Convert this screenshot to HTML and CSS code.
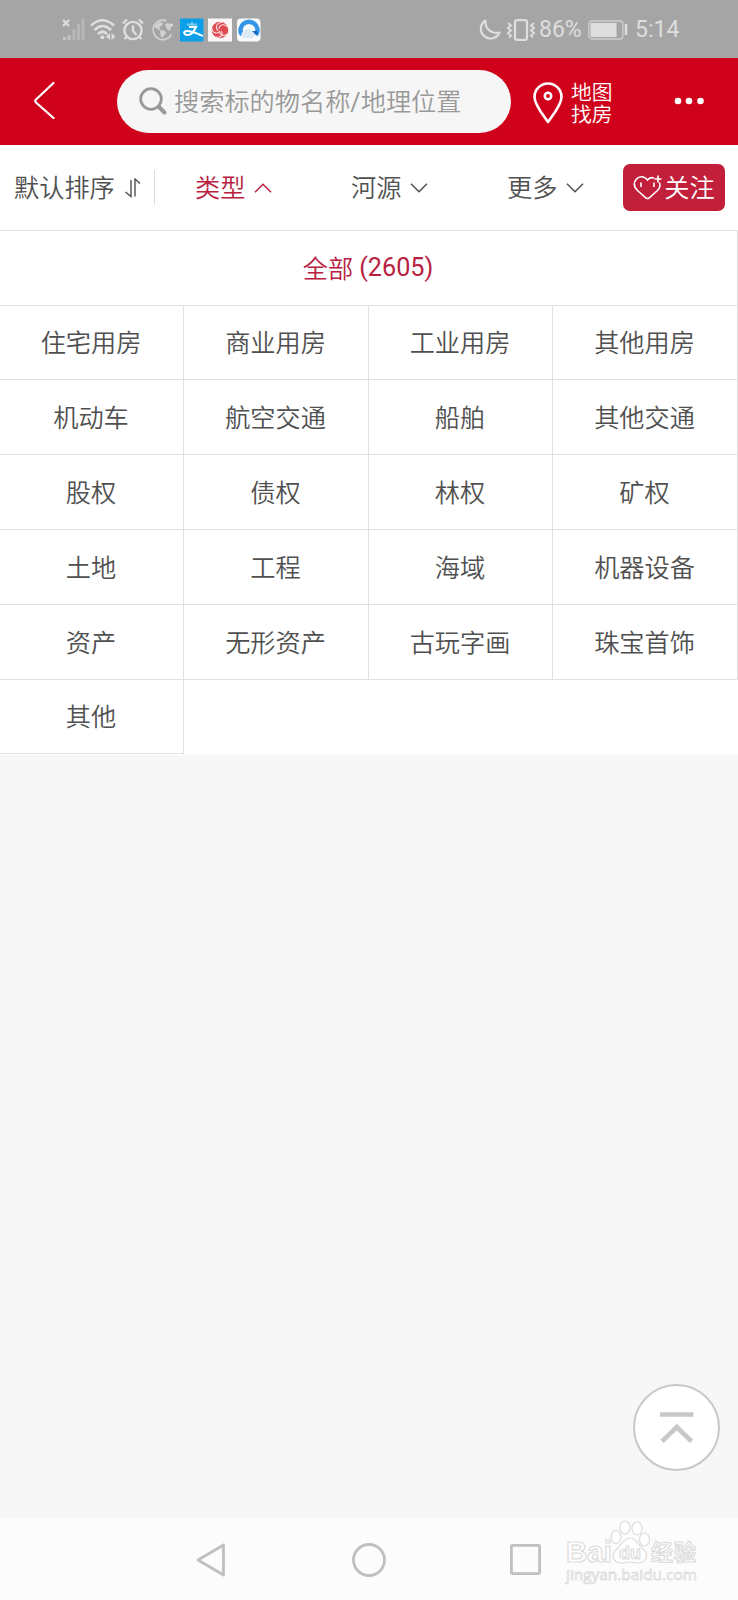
FILE: index.html
```html
<!DOCTYPE html>
<html lang="zh-CN">
<head>
<meta charset="utf-8">
<title>类型</title>
<link rel="stylesheet" href="styles.css">
</head>
<body>
<div class="status">
  <div class="status-left">
    <svg width="23" height="24" viewBox="0 0 23 24"><path d="M1 2l6 6M7 2l-6 6" stroke="#dedede" stroke-width="2.200"/><path d="M2.500 22v-3M7 22v-5" stroke="#c4c4c4" stroke-width="3"/><path d="M12 22V11M16.500 22V6M21 22V1" stroke="#b8b8b8" stroke-width="3"/></svg>
    <svg width="26" height="24" viewBox="0 0 26 24" fill="none" stroke="#dedede" stroke-width="2.600"><path d="M1 7.500Q12.500-3 24 7.500M4.500 12Q12.500 4 21 12M8 16Q12.500 11.500 17 16"/><circle cx="12.300" cy="19.300" r="2" fill="#dedede" stroke="none"/><path d="M20 15v7l-4-3.500zM21.500 15v7l4-3.500z" fill="#dedede" stroke="none"/></svg>
    <svg width="22" height="24" viewBox="0 0 22 24" fill="none" stroke="#dedede" stroke-width="2.400"><circle cx="11" cy="12.500" r="8.600"/><path d="M11 7.500v5.500l3.500 4M1 5.500l4-4M21 5.500l-4-4M4.500 19l-2 2M17.500 19l2 2"/></svg>
    <svg class="globe" width="23" height="24" viewBox="0 0 23 24"><path d="M15.500 2.800A9.800 9.800 0 1 0 20.500 16.500" fill="none" stroke="#d2d2d2" stroke-width="1.800"/><path d="M4 7.500l4-3 4 0-1 3-3 2 2 3-3-1-3-2zM9 12l5 1 1 2-4 5-1.500-3zM14 6l4-1 2 4-1 4-3-2z" fill="#d2d2d2"/><circle cx="20.500" cy="7" r="1.600" fill="#dedede"/></svg>
    <svg class="app" width="24" height="24" viewBox="0 0 24 24"><path d="M0 .5h23.500v23H0z" fill="#0a9fe8"/><path d="M7 6.500h10M12 4v4" stroke="#78c8f2" stroke-width="1.800"/><path d="M9 9h7c-2 4-4 8-8 8-5 0-5-4-1-4 5 0 9 2 16 5" fill="none" stroke="#fff" stroke-width="2"/></svg>
    <svg class="app" width="24" height="24" viewBox="0 0 24 24"><path d="M0 .5h24v23H0z" fill="#fbf7f7"/><circle cx="12" cy="12" r="8.300" fill="#dd4a50"/><path d="M15 4C8 5 7 9 10 13M20 9c-5-4-9-2-9 2M19 16c-3 3-7 1-8-3M8 19c5 1 8-2 5-6M4 10c0 5 4 6 8 4" fill="none" stroke="#f8dcdc" stroke-width="1.100"/></svg>
    <svg class="app" width="24" height="24" viewBox="0 0 24 24"><rect y=".5" width="23.500" height="23" rx="4" fill="#f8fbfe"/><path d="M5 17A8.500 8.500 0 1 1 19 17" fill="none" stroke="#3495e8" stroke-width="4.500"/><path d="M14 13h6.500v4.500z" fill="#1263c4"/><path d="M6 20a4 4 0 0 1 1-7 5 5 0 0 1 9 1 3.500 3.500 0 0 1 0 6z" fill="#dcebf7"/></svg>
  </div>
  <div class="status-right">
    <svg width="22" height="22" viewBox="0 0 22 22"><path d="M6.500 1.500A9.700 9.700 0 1 0 20.500 13.500 11 11 0 0 1 6.500 1.500z" fill="none" stroke="#dedede" stroke-width="2.200" stroke-linejoin="round"/></svg>
    <svg class="vibrate" width="28" height="22" viewBox="0 0 28 22" fill="none" stroke="#dedede"><rect x="8" y="1.200" width="12" height="19.600" rx="2" stroke-width="2.300"/><path d="M1 4l3 2.500-3 2.500 3 2.500L1 14l3 2.500-2 2M27 4l-3 2.500 3 2.500-3 2.500 3 2.500-3 2.500 2 2" stroke-width="1.900"/></svg>
    <span class="battery-text">86%</span>
    <svg class="battery" width="40" height="20" viewBox="0 0 40 20"><rect x=".8" y="1" width="34" height="18" rx="3" fill="none" stroke="#d0d0d0" stroke-width="1.300"/><path d="M2.500 3h26v14h-26z" fill="#dedede"/><path d="M38 4v11" stroke="#dedede" stroke-width="2.500"/></svg>
    <span class="clock">5:14</span>
  </div>
</div>

<header class="header">
  <svg class="back" width="24" height="40" viewBox="0 0 24 40"><path d="M20.500 2L3 18.500Q1.500 20 3 21.500L20.500 37" fill="none" stroke="#fff" stroke-width="2.200" stroke-linecap="round"/></svg>
  <div class="search">
    <svg width="28" height="28" viewBox="0 0 28 28" fill="none" stroke="#999"><circle cx="12" cy="12" r="10.300" stroke-width="2.800"/><path d="M20 20l5.500 5.500" stroke-width="4" stroke-linecap="round"/></svg>
    <span>搜索标的物名称<span class="latin">/</span>地理位置</span>
  </div>
  <svg class="pin" width="30" height="42" viewBox="0 0 30 42" fill="none" stroke="#fff"><path d="M15 40C10 33 1.500 23 1.500 15A13.500 13.500 0 0 1 28.500 15C28.500 23 20 33 15 40z" stroke-width="2.600" stroke-linejoin="round"/><circle cx="15" cy="14" r="3.200" stroke-width="2.600"/></svg>
  <span class="map-label">地图<br>找房</span>
  <svg class="dots" width="30" height="8" viewBox="0 0 30 8" fill="#fff"><circle cx="4" cy="4" r="3.300"/><circle cx="15" cy="4" r="3.300"/><circle cx="26.500" cy="4" r="3.300"/></svg>
</header>

<nav class="filters">
  <div class="filter sort"><span>默认排序</span><svg width="16" height="20" viewBox="0 0 16 20" fill="none" stroke="#505050" stroke-width="1.400"><path d="M.5 14l5.500 4.500V2M10 18.500V1l5 4.500"/></svg></div>
  <div class="filter type"><span>类型</span><svg width="18" height="10" viewBox="0 0 18 10" fill="none" stroke="#b7213f" stroke-width="1.500"><path d="M1 9.300L9 1.200l8 8.100"/></svg></div>
  <div class="filter city"><span>河源</span><svg width="18" height="10" viewBox="0 0 18 10" fill="none" stroke="#505050" stroke-width="1.500"><path d="M1 .7l8 8.100 8-8.100"/></svg></div>
  <div class="filter more"><span>更多</span><svg width="18" height="10" viewBox="0 0 18 10" fill="none" stroke="#505050" stroke-width="1.500"><path d="M1 .7l8 8.100 8-8.100"/></svg></div>
  <div class="follow"><svg width="29" height="25" viewBox="0 0 29 25" fill="none" stroke="#fff" stroke-width="1.600"><path d="M20.500 3C17.500 1.500 15.500 4 14.500 5 11 .5 6 1 3.500 4-.5 8.500 2 13 4.500 15.500L13 23q1.500 1 3 0l8.500-7.500C27 13 27.500 10.500 26.500 8M25 1v6M22 4h6M8 8v3.500M21 8v3.500" stroke-linecap="round"/></svg><span>关注</span></div>
</nav>

<main class="grid">
  <div class="cell all">全部&nbsp;<span class="latin count">(2605)</span></div>
  <div class="cell">住宅用房</div><div class="cell">商业用房</div><div class="cell">工业用房</div><div class="cell">其他用房</div>
  <div class="cell">机动车</div><div class="cell">航空交通</div><div class="cell">船舶</div><div class="cell">其他交通</div>
  <div class="cell">股权</div><div class="cell">债权</div><div class="cell">林权</div><div class="cell">矿权</div>
  <div class="cell">土地</div><div class="cell">工程</div><div class="cell">海域</div><div class="cell">机器设备</div>
  <div class="cell">资产</div><div class="cell">无形资产</div><div class="cell">古玩字画</div><div class="cell">珠宝首饰</div>
  <div class="cell">其他</div>
</main>

<div class="blank">
  <div class="to-top"><svg width="34" height="31" viewBox="0 0 34 31" fill="none" stroke="#c8c8c8" stroke-width="4.600"><path d="M0 2.500h33.500M2 29.500L16.800 15l14.800 14.500"/></svg></div>
</div>

<footer class="navbar">
  <svg class="nav-back" width="30" height="34" viewBox="0 0 30 34"><path d="M2 17L27.500 2v30z" fill="none" stroke="#c0c0c0" stroke-width="2.800" stroke-linejoin="round"/></svg>
  <svg class="nav-home" width="34" height="34" viewBox="0 0 34 34"><circle cx="17" cy="17" r="15.500" fill="none" stroke="#c0c0c0" stroke-width="2.800"/></svg>
  <svg class="nav-recent" width="31" height="31" viewBox="0 0 31 31"><rect x="1.400" y="1.400" width="28.200" height="28.200" rx="1" fill="none" stroke="#c0c0c0" stroke-width="2.800"/></svg>
  <svg class="watermark" width="140" height="68" viewBox="0 0 140 68" fill="#fff" stroke="#dcdcdc" stroke-width="1.200">
    <text class="wm-bold" x="0" y="41" font-size="29" textLength="46" lengthAdjust="spacingAndGlyphs">Bai</text>
    <text class="wm-bold" x="85" y="39" font-size="22" textLength="45">经验</text>
    <ellipse cx="50" cy="16" rx="5" ry="6.500"/><ellipse cx="59" cy="6.500" rx="5" ry="6.500"/><ellipse cx="71" cy="7.500" rx="5" ry="6.500"/><ellipse cx="78.500" cy="18.500" rx="5" ry="6.500"/>
    <path d="M64 17c6 0 8 7 13 11 6 5 4 14-5 14-4 0-5-1-8-1s-5 1-9 1c-8 0-10-9-5-13 5-4 8-12 14-12z"/>
    <text class="wm-bold" x="53" y="38" font-size="19" textLength="22" lengthAdjust="spacingAndGlyphs">du</text>
    <text class="wm-url" x="0" y="58.500" font-size="15" textLength="131" lengthAdjust="spacingAndGlyphs">jingyan.baidu.com</text>
  </svg>
</footer>
</body>
</html>
```
FILE: styles.css
```css
* { box-sizing: border-box; }
body {
  margin: 0;
  width: 738px;
  height: 1600px;
  display: flex;
  flex-direction: column;
  background: #f7f7f7;
  color: #505050;
  font-family: Roboto, "Noto Sans CJK SC DemiLight", "Noto Sans CJK SC", sans-serif;
  font-size: 25.200px;
  font-weight: 350;
  white-space: nowrap;
  overflow: hidden;
}
svg { display: block; flex: none; }
.latin { font-weight: 400; }

.status {
  height: 58px;
  flex: none;
  display: flex;
  justify-content: space-between;
  align-items: center;
  padding: 0 60px 0 62px;
  background: #a5a5a5;
  color: #dedede;
  font-size: 23px;
  font-weight: 400;
}
.status-left { display: flex; align-items: center; gap: 5.300px; padding-top: 1px; }
.globe { margin: 0 1px 0 2px; }
.app + .app { margin-left: -1px; }
.status-right { display: flex; align-items: center; padding-top: 1px; }
.vibrate { margin: 0 4px 0 6px; }
.battery-text { width: 49px; }
.battery { margin-right: 7px; }
.clock { width: 43px; }

.header {
  height: 87px;
  flex: none;
  display: flex;
  align-items: center;
  padding-left: 33px;
  background: #d0021b;
  color: #fff;
}
.back { margin-bottom: 2px; }
.search {
  width: 394px;
  height: 63px;
  margin-left: 60px;
  padding-left: 22px;
  display: flex;
  align-items: center;
  gap: 7px;
  border-radius: 32px;
  background: #f6f6f6;
  color: #999;
}
.search > svg { margin-bottom: 1px; }
.search > span { padding-bottom: 4px; }
.pin { margin: 2px 0 0 22px; }
.map-label { margin: 4px 0 0 8px; font-size: 20.800px; line-height: 22px; font-weight: 400; }
.dots { margin: 0 0 2px 61px; }

.filters {
  height: 85px;
  flex: none;
  display: flex;
  align-items: center;
  background: #fff;
}
.filter { display: flex; align-items: center; gap: 9px; }
.filter > span, .follow > span { padding-bottom: 4px; }
.sort { width: 155px; height: 35px; padding-left: 14px; border-right: 1px solid #dcdcdc; }
.sort > svg { margin-left: 1px; }
.type { width: 156px; padding-left: 40px; color: #b7213f; }
.city { width: 156px; padding-left: 40px; }
.more { width: 156px; padding-left: 40px; }
.follow {
  width: 102px;
  height: 47px;
  display: flex;
  align-items: center;
  justify-content: center;
  gap: 2px;
  border-radius: 7px;
  background: #c11f3a;
  color: #fff;
}

.grid {
  height: 525px;
  flex: none;
  display: grid;
  grid-template-columns: 184px 185px 184px 185px;
  grid-template-rows: 75px 74px 75px 75px 75px 75px 74px;
  border-top: 1px solid #e0e0e0;
  background: #fff;
}
.cell {
  display: flex;
  align-items: center;
  justify-content: center;
  padding: 0 1px 3px 0;
  border-right: 1px solid #e0e0e0;
  border-bottom: 1px solid #e0e0e0;
}
.all { grid-column: 1 / -1; color: #b7213f; }
.count { padding-top: 2px; }

.blank {
  flex: 1;
  display: flex;
  align-items: flex-end;
  justify-content: flex-end;
  padding: 0 18px 48px 0;
}
.to-top {
  width: 87px;
  height: 87px;
  display: flex;
  align-items: center;
  justify-content: center;
  border: 2px solid #c8c8c8;
  border-radius: 50%;
  background: #fff;
}

.navbar {
  height: 81px;
  flex: none;
  display: flex;
  align-items: center;
  padding-left: 196px;
  background: #fcfcfc;
}
.nav-home { margin-left: 126px; }
.nav-recent { margin-left: 124px; }
.watermark { margin: 0 0 9px 25px; overflow: visible; }
.wm-bold { font-family: "Liberation Sans", "Noto Sans CJK SC", sans-serif; font-weight: 700; }
.wm-url { font-family: "Open Sans", sans-serif; font-weight: 400; stroke-width: .8px; }
```
